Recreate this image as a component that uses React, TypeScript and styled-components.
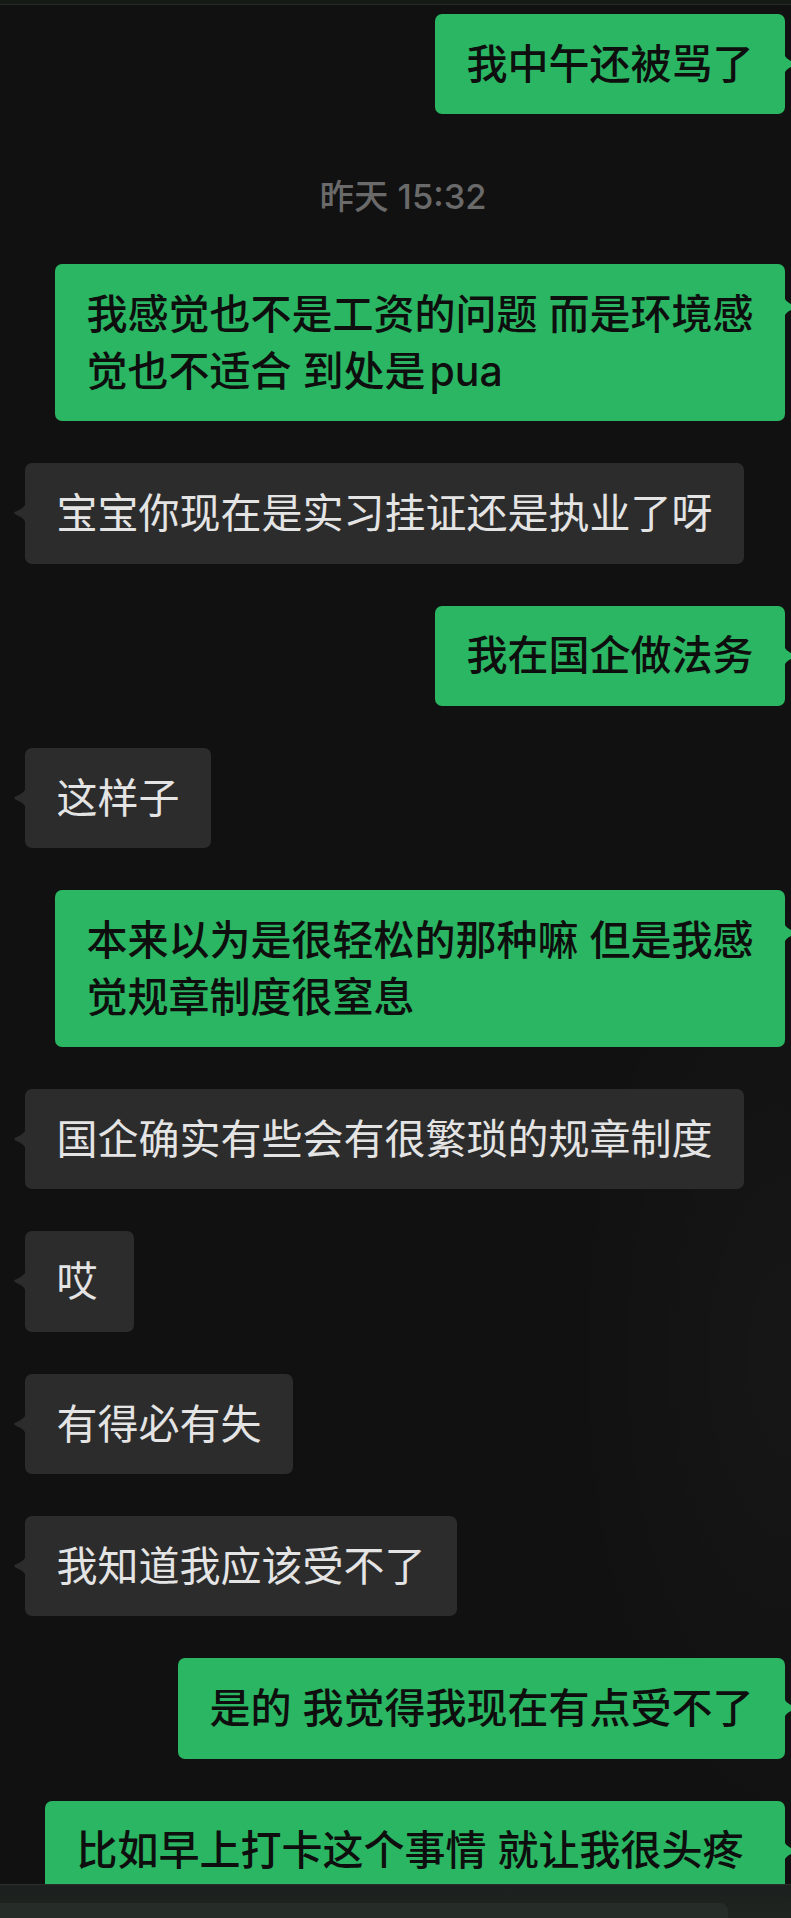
import React from "react";
import styled, { createGlobalStyle } from "styled-components";

const GlobalStyle = createGlobalStyle`
  html, body {
    margin: 0;
    padding: 0;
    background: #111111;
  }
  body {
    font-family: Inter, "Noto Sans CJK SC", "Noto Sans", sans-serif;
  }
  * { box-sizing: border-box; }
`;

const Page = styled.div`
  width: 791px;
  height: 1918px;
  display: flex;
  flex-direction: column;
  background: #111111;
  overflow: hidden;
`;

const TopBar = styled.div`
  flex: none;
  height: 5px;
  background: #151a17;
  border-bottom: 1px solid #252926;
`;

const ChatArea = styled.div`
  flex: 1;
  min-height: 0;
  overflow: hidden;
  padding-top: 9px;
  display: flex;
  flex-direction: column;
  gap: 42px;
  background:
    radial-gradient(ellipse 320px 700px at 100% 72%, rgba(255, 255, 255, 0.025), rgba(255, 255, 255, 0) 70%),
    #111111;
`;

const Row = styled.div<{ $side: "left" | "right" }>`
  display: flex;
  justify-content: ${(p) => (p.$side === "right" ? "flex-end" : "flex-start")};
  padding: ${(p) => (p.$side === "right" ? "0 6px 0 0" : "0 0 0 25px")};
`;

const Bubble = styled.div<{ $side: "left" | "right"; $minWidth?: string }>`
  position: relative;
  padding: 21.8px 31.5px;
  min-width: ${(p) => p.$minWidth ?? "0"};
  font-size: 41px;
  line-height: 56.7px;
  white-space: nowrap;
  border-radius: 7px;
  font-weight: ${(p) => (p.$side === "right" ? 500 : 400)};
  background: ${(p) => (p.$side === "right" ? "#2ab662" : "#2c2c2c")};
  color: ${(p) => (p.$side === "right" ? "#0e0e0e" : "#e4e4e4")};
`;

const Latin = styled.span`
  margin-left: 4px;
`;

const Tail = styled.svg<{ $side: "left" | "right"; $multi?: boolean }>`
  position: absolute;
  top: ${(p) => (p.$multi ? 31 : 38)}px;
  width: 13px;
  height: 24px;
  ${(p) => (p.$side === "right" ? "right: -12px; transform: scaleX(-1);" : "left: -12px;")}
  fill: ${(p) => (p.$side === "right" ? "#2ab662" : "#2c2c2c")};
`;

const TimeRow = styled.div`
  height: 66px;
  padding: 16px 0 0 15px;
  text-align: center;
  font-size: 34.5px;
  font-weight: 500;
  line-height: 50px;
  color: #6a6a6a;
`;

const InputBar = styled.div`
  flex: none;
  height: 34px;
  padding-top: 18px;
  background: linear-gradient(180deg, #1c201e 0%, #1f2421 100%);
  border-top: 1px solid #2a2f2c;
`;

const InputField = styled.div`
  width: 728px;
  height: 100%;
  background: #262c28;
  border-radius: 0 8px 0 0;
`;

type Line = { cjk: string; latin?: string };

type Msg =
  | { kind: "time"; text: string }
  | { kind: "msg"; side: "left" | "right"; lines: Line[]; minWidth?: string };

const messages: Msg[] = [
  { kind: "msg", side: "right", lines: [{ cjk: "我中午还被骂了" }] },
  { kind: "time", text: "昨天 15:32" },
  {
    kind: "msg",
    side: "right",
    lines: [{ cjk: "我感觉也不是工资的问题 而是环境感" }, { cjk: "觉也不适合 到处是", latin: "pua" }],
  },
  { kind: "msg", side: "left", lines: [{ cjk: "宝宝你现在是实习挂证还是执业了呀" }] },
  { kind: "msg", side: "right", lines: [{ cjk: "我在国企做法务" }] },
  { kind: "msg", side: "left", lines: [{ cjk: "这样子" }] },
  {
    kind: "msg",
    side: "right",
    lines: [{ cjk: "本来以为是很轻松的那种嘛 但是我感" }, { cjk: "觉规章制度很窒息" }],
  },
  { kind: "msg", side: "left", lines: [{ cjk: "国企确实有些会有很繁琐的规章制度" }] },
  { kind: "msg", side: "left", lines: [{ cjk: "哎" }], minWidth: "109px" },
  { kind: "msg", side: "left", lines: [{ cjk: "有得必有失" }] },
  { kind: "msg", side: "left", lines: [{ cjk: "我知道我应该受不了" }] },
  { kind: "msg", side: "right", lines: [{ cjk: "是的 我觉得我现在有点受不了" }] },
  { kind: "msg", side: "right", lines: [{ cjk: "比如早上打卡这个事情 就让我很头疼" }], minWidth: "740px" },
];

const TailShape: React.FC<{ side: "left" | "right"; multi?: boolean }> = ({ side, multi }) => (
  <Tail $side={side} $multi={multi} viewBox="0 0 13 24">
    <path d="M13 0 C13 6 7 8.5 2 10.8 Q0.2 12 2 13.2 C7 15.5 13 18 13 24 Z" />
  </Tail>
);

export default function App() {
  return (
    <>
      <GlobalStyle />
      <Page>
        <TopBar />
        <ChatArea>
          {messages.map((m, i) =>
            m.kind === "time" ? (
              <TimeRow key={i}>{m.text}</TimeRow>
            ) : (
              <Row key={i} $side={m.side}>
                <Bubble $side={m.side} $minWidth={m.minWidth}>
                  <TailShape side={m.side} multi={m.lines.length > 1} />
                  {m.lines.map((l, j) => (
                    <React.Fragment key={j}>
                      {j > 0 && <br />}
                      {l.cjk}
                      {l.latin && <Latin>{l.latin}</Latin>}
                    </React.Fragment>
                  ))}
                </Bubble>
              </Row>
            )
          )}
        </ChatArea>
        <InputBar>
          <InputField />
        </InputBar>
      </Page>
    </>
  );
}
